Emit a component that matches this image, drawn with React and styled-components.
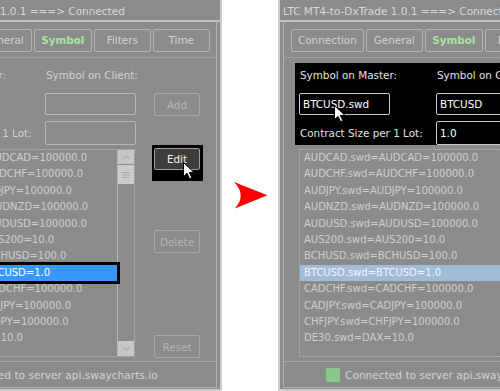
import React from "react";
import styled, { createGlobalStyle, css } from "styled-components";

const GlobalStyle = createGlobalStyle`
  html, body {
    margin: 0;
    padding: 0;
    background: #fff;
  }
  body {
    font-family: "DejaVu Sans", Verdana, sans-serif;
  }
`;

const SYMBOLS = [
  "AUDCAD.swd=AUDCAD=100000.0",
  "AUDCHF.swd=AUDCHF=100000.0",
  "AUDJPY.swd=AUDJPY=100000.0",
  "AUDNZD.swd=AUDNZD=100000.0",
  "AUDUSD.swd=AUDUSD=100000.0",
  "AUS200.swd=AUS200=10.0",
  "BCHUSD.swd=BCHUSD=100.0",
  "BTCUSD.swd=BTCUSD=1.0",
  "CADCHF.swd=CADCHF=100000.0",
  "CADJPY.swd=CADJPY=100000.0",
  "CHFJPY.swd=CHFJPY=100000.0",
  "DE30.swd=DAX=10.0",
];

const TABS = ["Connection", "General", "Symbol", "Filters", "Time"];

const Cursor = ({ x, y }) => (
  <CursorWrap style={{ left: x, top: y }}>
    <svg width="12" height="18" viewBox="0 0 12 18">
      <path
        d="M0.5 0.5 L0.5 14.5 L4 11.2 L6.6 16.8 L8.8 15.8 L6.3 10.4 L11 10.4 Z"
        fill="#fff"
        stroke="#000"
        strokeWidth="1"
        strokeLinejoin="round"
      />
    </svg>
  </CursorWrap>
);

const Dialog = ({ formFocus, editFocus, selection, master, client, lot, cursor }) => (
  <Window>
    <TitleBar>LTC MT4-to-DxTrade 1.0.1 ===&gt; Connected</TitleBar>
    <Body>
      <Frame>
        <TabBar>
          {TABS.map(t => (
            <Tab key={t} $active={t === "Symbol"}>
              {t}
            </Tab>
          ))}
        </TabBar>
        <Divider />
        <Main>
          <FormSection $focus={formFocus}>
            <Label $focus={formFocus}>Symbol on Master:</Label>
            <Label $focus={formFocus}>Symbol on Client:</Label>
            <Field $focus={formFocus}>{master}</Field>
            <Field $focus={formFocus}>{client}</Field>
            <Label $focus={formFocus}>Contract Size per 1 Lot:</Label>
            <Field $focus={formFocus}>{lot}</Field>
          </FormSection>
          <SideColumn>
            <Button $top={30}>Add</Button>
          </SideColumn>
          <ListBox>
            <Items>
              {SYMBOLS.map((s, i) => (
                <Item key={s} $selected={i === 7 ? selection : null}>
                  {s}
                </Item>
              ))}
            </Items>
            <ScrollBar>
              <ScrollButton>
                <svg width="7" height="4" viewBox="0 0 7 4">
                  <path d="M0.5 3.5 L3.5 0.8 L6.5 3.5" fill="none" stroke="#9a9a9a" strokeWidth="1" />
                </svg>
              </ScrollButton>
              <Thumb>
                <svg width="8" height="6" viewBox="0 0 8 6">
                  <path d="M0 0.5 H8 M0 3 H8 M0 5.5 H8" stroke="#a6a6a6" strokeWidth="1" />
                </svg>
              </Thumb>
              <Track />
              <ScrollButton $bottom>
                <svg width="7" height="4" viewBox="0 0 7 4">
                  <path d="M0.5 0.5 L3.5 3.2 L6.5 0.5" fill="none" stroke="#9a9a9a" strokeWidth="1" />
                </svg>
              </ScrollButton>
            </ScrollBar>
          </ListBox>
          <SideColumn $stack>
            <Spot $focus={editFocus}>
              <Button $primary>Edit</Button>
            </Spot>
            <Button $top={60}>Delete</Button>
            <Button $push>Reset</Button>
          </SideColumn>
        </Main>
        <StatusBar>
          <Led />
          <span>Connected to server api.swaycharts.io</span>
        </StatusBar>
      </Frame>
    </Body>
    {cursor && <Cursor x={cursor[0]} y={cursor[1]} />}
  </Window>
);

export default function App() {
  return (
    <>
      <GlobalStyle />
      <Page>
        <Viewport $anchor="end">
          <Dialog editFocus selection="active" master="" client="" lot="" cursor={[294, 162]} />
        </Viewport>
        <ArrowZone>
          <svg width="34" height="27" viewBox="0 0 34 27">
            <path d="M0 0 L33.5 13.3 L0.8 26.5 Q13 13.3 0 0 Z" fill="#ff0000" />
          </svg>
        </ArrowZone>
        <Viewport $anchor="start">
          <Dialog
            formFocus
            selection="inactive"
            master="BTCUSD.swd"
            client="BTCUSD"
            lot="1.0"
            cursor={[54, 105]}
          />
        </Viewport>
      </Page>
    </>
  );
}

const Page = styled.div`
  display: flex;
  width: 500px;
  height: 391px;
  overflow: hidden;
  background: #fff;
`;

const Viewport = styled.div`
  flex: 0 0 222px;
  height: 391px;
  overflow: hidden;
  display: flex;
  justify-content: ${props => (props.$anchor === "end" ? "flex-end" : "flex-start")};
`;

const ArrowZone = styled.div`
  flex: 0 0 56px;
  display: flex;
  align-items: center;
  justify-content: center;
  padding-left: 2px;
  box-sizing: border-box;
`;

const Window = styled.div`
  position: relative;
  flex: 0 0 335px;
  height: 391px;
  box-sizing: border-box;
  background: #8b8b8b;
  border: 2px solid #cbcbcb;
  border-top: none;
  display: flex;
  flex-direction: column;
  color: #d5d5d5;
`;

const TitleBar = styled.div`
  box-sizing: border-box;
  height: 22px;
  padding: 3px 0 0 3px;
  line-height: 17px;
  font-size: 10.5px;
  color: #d7d7d7;
  white-space: nowrap;
  overflow: hidden;
  border-bottom: 2px solid #c2c2c2;
`;

const Body = styled.div`
  flex: 1;
  display: flex;
  padding: 0 3px 1px;
`;

const Frame = styled.div`
  flex: 1;
  display: flex;
  flex-direction: column;
  border: 1px solid #b3b3b3;
  border-top: none;
`;

const TabBar = styled.div`
  display: flex;
  gap: 2px;
  margin-top: 7px;
  padding-left: 7px;
`;

const Tab = styled.div`
  box-sizing: border-box;
  height: 23px;
  min-width: 57px;
  padding: 0 6px;
  border: 1px solid #b4b4b4;
  border-radius: 2px;
  text-align: center;
  line-height: 21px;
  font-size: 10.4px;
  color: #d3d3d3;

  ${props =>
    props.$active &&
    css`
      color: #a9e4a2;
      font-weight: bold;
      min-width: 58px;
    `}
`;

const Divider = styled.div`
  margin-top: 5px;
  border-top: 1px dotted #a7bca7;
`;

const Main = styled.div`
  display: grid;
  grid-template-columns: 239px 46px;
  column-gap: 11px;
  row-gap: 4px;
  padding-left: 11px;
  margin-top: 5px;
`;

const FormSection = styled.div`
  display: grid;
  grid-template-columns: 137px 91px;
  grid-template-rows: 24px 22px 24px;
  row-gap: 6px;
  align-items: center;
  padding-left: 4px;
  background: ${props => (props.$focus ? "#000" : "transparent")};
`;

const Label = styled.div`
  font-size: 10.4px;
  padding-left: 1px;
  white-space: nowrap;
  color: ${props => (props.$focus ? "#e2e2e2" : "#d3d3d3")};
`;

const Field = styled.div`
  box-sizing: border-box;
  width: 91px;
  height: 100%;
  display: flex;
  align-items: center;
  padding-left: 3px;
  font-size: 10.4px;
  border: 1px solid ${props => (props.$focus ? "#c9c9c9" : "#b7b7b7")};
  border-radius: 2px;
  background: ${props => (props.$focus ? "#000" : "transparent")};
  color: #fff;
`;

const SideColumn = styled.div`
  display: flex;
  flex-direction: column;
  align-items: flex-start;
`;

const Button = styled.div`
  box-sizing: border-box;
  width: 46px;
  height: 23px;
  margin-top: ${props => props.$top || 0}px;
  display: flex;
  align-items: center;
  justify-content: center;
  font-size: 10.4px;
  border: 1px solid #a9a9a9;
  border-radius: 2px;
  color: #b5b5b5;

  ${props =>
    props.$push &&
    css`
      margin-top: auto;
      margin-bottom: -1px;
    `}

  ${props =>
    props.$primary &&
    css`
      background: #3d3d3d;
      border-color: #9d9d9d;
      color: #f4f4f4;
      height: 22px;
    `}
`;

const Spot = styled.div`
  margin: -4px -3px -11px -2px;
  padding: 3px 3px 11px 2px;
  background: ${props => (props.$focus ? "#000" : "transparent")};
`;

const ListBox = styled.div`
  box-sizing: border-box;
  margin-left: 4px;
  width: 227px;
  height: 208px;
  border: 1px dotted #b8b8b8;
  display: flex;
`;

const Items = styled.div`
  flex: 1;
  display: flex;
  flex-direction: column;
`;

const Item = styled.div`
  height: 16.4px;
  line-height: 16.4px;
  padding-left: 4px;
  font-size: 10px;
  white-space: nowrap;
  color: #cfcfcf;

  ${props =>
    props.$selected === "active" &&
    css`
      background: #3797fb;
      color: #fff;
      box-shadow: 0 0 0 3px #000;
      position: relative;
    `}

  ${props =>
    props.$selected === "inactive" &&
    css`
      background: #a0bcd9;
      color: #f2f6fa;
    `}
`;

const ScrollBar = styled.div`
  flex: 0 0 16px;
  display: flex;
  flex-direction: column;
  border-left: 1px solid #b6b6b6;
`;

const ScrollButton = styled.div`
  height: ${props => (props.$bottom ? 15 : 14)}px;
  background: #c6c6c6;
  display: flex;
  align-items: center;
  justify-content: center;
`;

const Thumb = styled.div`
  height: 19px;
  margin-top: 1px;
  background: #cbcbcb;
  display: flex;
  align-items: center;
  justify-content: center;
`;

const Track = styled.div`
  flex: 1;
`;

const StatusBar = styled.div`
  margin-top: 4px;
  border-top: 1px solid #a8a8a8;
  padding: 6px 0 0 42px;
  display: flex;
  align-items: center;
  gap: 5px;
  font-size: 10.6px;
  color: #d4d4d4;
  white-space: nowrap;
`;

const Led = styled.div`
  width: 14px;
  height: 14px;
  background: #88c888;
  border-radius: 1px;
  flex-shrink: 0;
`;

const CursorWrap = styled.div`
  position: absolute;
  line-height: 0;
`;
